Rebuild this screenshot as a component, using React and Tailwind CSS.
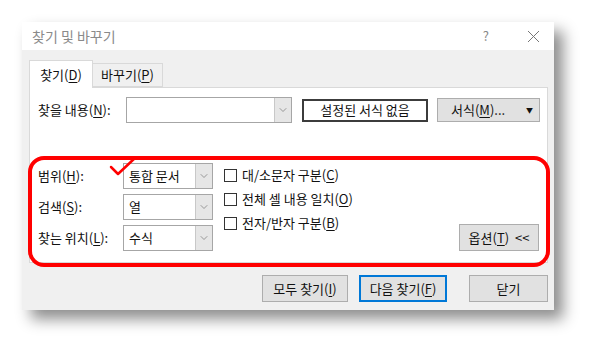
import { ChevronDown } from "lucide-react"

const font = { fontFamily: '"Noto Sans CJK KR", "Noto Sans", sans-serif' }

function U({ children }) {
  return <span className="underline underline-offset-2">{children}</span>
}

function Combo({ value, width = "w-[90px]" }) {
  return (
    <div className={`flex h-[26px] ${width} border border-[#a6a6a6] bg-white`}>
      <div className="flex flex-1 items-center pl-[5px] text-[13px] text-[#111]">{value}</div>
      <div className="flex w-[17px] items-center justify-center border-l border-[#c8c8c8] bg-[#e6e6e6]">
        <ChevronDown className="h-3 w-3 text-[#666]" strokeWidth={1.25} />
      </div>
    </div>
  )
}

function Check({ children }) {
  return (
    <div className="flex h-[24px] items-center gap-[5px] text-[13px] text-[#111]">
      <div className="h-[13px] w-[13px] border border-[#333] bg-white" />
      <span>{children}</span>
    </div>
  )
}

export default function App() {
  return (
    <div className="h-[355px] w-[600px] bg-white pl-[22px] pt-[22px]" style={font}>
      <div className="relative flex h-[288px] w-[532px] flex-col bg-[#f0f0f0] shadow-[9px_9px_14px_rgba(0,0,0,0.45)]">
        {/* title bar */}
        <div className="flex h-[28px] items-center bg-white pl-[10px] pr-[14px] text-[14px] text-[#8a8a8a]">
          <span>찾기 및 바꾸기</span>
          <span className="ml-auto mr-[38px] text-[13px] text-[#888]">?</span>
          <svg width="13" height="13" viewBox="0 0 13 13">
            <path d="M1 1L12 12M12 1L1 12" stroke="#777" strokeWidth="1" />
          </svg>
        </div>

        <div className="flex flex-1 flex-col pl-[7px] pr-[6px] pt-[10px]">
          {/* tabs */}
          <div className="flex h-[27px] items-end text-[13px] text-[#111]">
            <div className="relative z-10 -mb-px flex h-[28px] w-[64px] items-center justify-center border border-b-0 border-[#d9d9d9] bg-white">
              찾기(<U>D</U>)
            </div>
            <div className="flex h-[24px] w-[70px] items-center justify-center border border-l-0 border-[#d9d9d9] bg-[#f0f0f0]">
              바꾸기(<U>P</U>)
            </div>
          </div>

          {/* panel */}
          <div className="flex h-[176px] flex-col border border-[#d9d9d9] bg-white">
            <div className="mt-[9px] flex items-center text-[13px] text-[#111]">
              <div className="w-[96px] pl-[8px]">찾을 내용(<U>N</U>):</div>
              <Combo value="" width="w-[166px]" />
              <div className="ml-[10px] flex h-[23px] w-[126px] items-center justify-center border-2 border-[#3c3c3c] bg-white">
                설정된 서식 없음
              </div>
              <div className="ml-[9px] flex h-[24px] w-[103px] items-center border border-[#adadad] bg-[#e1e1e1] pl-[13px]">
                서식(<U>M</U>)...
                <span className="ml-auto mr-[6px] text-[7px]">▼</span>
              </div>
            </div>

            <div className="mt-[40px] flex pr-[8px]">
              <div className="flex flex-col gap-[5px] text-[13px] text-[#111]">
                <div className="flex items-center">
                  <div className="w-[93px] pl-[8px]">범위(<U>H</U>):</div>
                  <Combo value="통합 문서" />
                </div>
                <div className="flex items-center">
                  <div className="w-[93px] pl-[8px]">검색(<U>S</U>):</div>
                  <Combo value="열" />
                </div>
                <div className="flex items-center">
                  <div className="w-[93px] pl-[8px]">찾는 위치(<U>L</U>):</div>
                  <Combo value="수식" />
                </div>
              </div>
              <div className="ml-[11px] flex flex-col">
                <Check>대/소문자 구분(<U>C</U>)</Check>
                <Check>전체 셀 내용 일치(<U>O</U>)</Check>
                <Check>전자/반자 구분(<U>B</U>)</Check>
              </div>
              <div className="ml-auto mt-auto flex h-[27px] w-[80px] items-center justify-center border border-[#adadad] bg-[#e1e1e1] text-[13px] text-[#111]">
                옵션(<U>T</U>)&nbsp;&nbsp;&lt;&lt;
              </div>
            </div>
          </div>

          {/* bottom buttons */}
          <div className="mt-[12px] flex justify-end text-[13px] text-[#111]">
            <div className="flex h-[27px] w-[86px] items-center justify-center border border-[#adadad] bg-[#e1e1e1]">
              모두 찾기(<U>I</U>)
            </div>
            <div className="ml-[11px] flex h-[27px] w-[88px] items-center justify-center border-2 border-[#0078d7] bg-[#e1e1e1]">
              다음 찾기(<U>F</U>)
            </div>
            <div className="ml-[22px] flex h-[27px] w-[79px] items-center justify-center border border-[#adadad] bg-[#e1e1e1]">
              닫기
            </div>
          </div>
        </div>

        {/* red annotation */}
        <div className="pointer-events-none absolute left-[6px] top-[134px] h-[111px] w-[522px] rounded-[16px] border-4 border-[#ff0000]" />
        <svg className="pointer-events-none absolute left-[86px] top-[133px]" width="30" height="22" viewBox="0 0 30 22">
          <path d="M3 12L10 19L27 3" fill="none" stroke="#ff0000" strokeWidth="2.5" strokeLinecap="round" strokeLinejoin="round" />
        </svg>
      </div>
    </div>
  )
}
